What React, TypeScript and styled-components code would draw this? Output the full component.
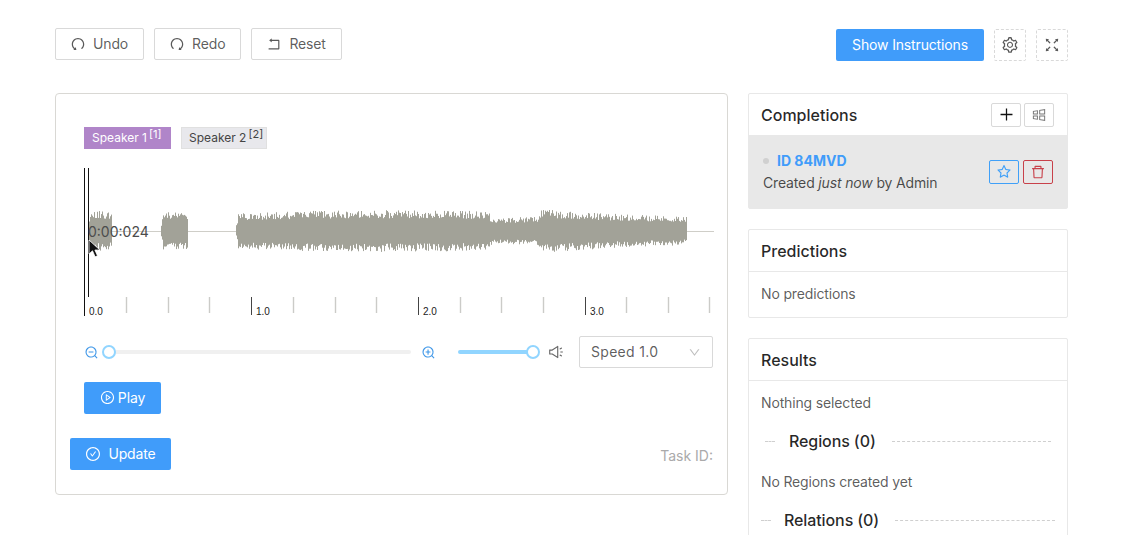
import styled, { createGlobalStyle } from "styled-components";
import {
  AiOutlineUndo,
  AiOutlineRedo,
  AiOutlineRollback,
  AiOutlineSetting,
  AiOutlineFullscreen,
  AiOutlinePlayCircle,
  AiOutlineCheckCircle,
  AiOutlineZoomIn,
  AiOutlineZoomOut,
  AiOutlineSound,
  AiOutlineDown,
  AiOutlineStar,
  AiOutlineDelete,
  AiOutlinePlus,
  AiOutlineWindows,
} from "react-icons/ai";

const GlobalStyle = createGlobalStyle`
  html, body {
    margin: 0;
    height: 535px;
    overflow: hidden;
    background: #fff;
    font-family: Inter, "Liberation Sans", sans-serif;
    font-size: 14px;
    letter-spacing: -0.15px;
    color: rgba(0, 0, 0, 0.65);
  }
  *, *::before, *::after { box-sizing: border-box; }
`;

// fake audio envelope: x position and amplitude, three bursts of sound
const BURSTS = [
  [[88, 21], [112, 19]],
  [[161, 19], [188, 18]],
  [[236, 18], [300, 20], [380, 21], [488, 20], [492, 12], [537, 15], [541, 22], [600, 18], [687, 14]],
];

function rand(i: number) {
  const v = Math.sin(i * 12.9898) * 43758.5453;
  return v - Math.floor(v);
}

function envelope(points: number[][], x: number) {
  for (let i = 1; i < points.length; i++) {
    const [x0, a0] = points[i - 1];
    const [x1, a1] = points[i];
    if (x <= x1) return a0 + ((a1 - a0) * (x - x0)) / (x1 - x0);
  }
  return 0;
}

function buildWave() {
  let d = "";
  BURSTS.forEach((points) => {
    const from = points[0][0];
    const to = points[points.length - 1][0];
    for (let x = from; x < to; x += 1) {
      const amp = envelope(points, x);
      const edge = Math.min(1, (x - from + 1) / 3, (to - x + 1) / 2);
      const up = amp * edge * (0.6 + 0.4 * rand(x + 0.37));
      const down = amp * edge * (0.6 + 0.4 * rand(x + 500.37));
      d += `M${x + 0.5} ${(63 - up).toFixed(1)}V${(63 + down).toFixed(1)}`;
    }
  });
  return d;
}

const WAVE = buildWave();
const MAJOR = [
  { x: 84, label: "0.0" },
  { x: 251, label: "1.0" },
  { x: 418, label: "2.0" },
  { x: 585, label: "3.0" },
];
const MINOR = [126, 168, 209, 293, 335, 376, 460, 501, 543, 626, 668, 709];

function Waveform() {
  return (
    <WaveBox>
      <svg width="630" height="148" viewBox="84 0 630 148">
        <line x1="88" x2="714" y1="63.5" y2="63.5" stroke="#cfcec8" />
        <path d={WAVE} stroke="#a2a298" strokeWidth="1" fill="none" />
        <line x1="84.5" x2="84.5" y1="0" y2="148" stroke="#111" />
        <line x1="88.5" x2="88.5" y1="0" y2="129" stroke="#111" />
        {MAJOR.map((t) => (
          <g key={t.label}>
            {t.x !== 84 && <line x1={t.x + 0.5} x2={t.x + 0.5} y1="129" y2="147" stroke="#444" />}
            <text x={t.x + 5} y="147" fontSize="10" fontFamily="Liberation Sans" letterSpacing="0" fill="#222">
              {t.label}
            </text>
          </g>
        ))}
        {MINOR.map((x) => (
          <line key={x} x1={x + 0.5} x2={x + 0.5} y1="129" y2="145" stroke="#cbcbc8" strokeWidth="1.4" />
        ))}
      </svg>
      <TimeLabel>0:00:024</TimeLabel>
      <Cursor width="14" height="20" viewBox="0 0 14 20">
        <path d="M1 1v14l3.5-3.2 2.6 6 2.4-1-2.6-5.8h5z" fill="#111" stroke="#fff" strokeWidth="0.8" />
      </Cursor>
    </WaveBox>
  );
}

export default function App() {
  return (
    <Page>
      <GlobalStyle />
      <Toolbar>
        <Group $align="flex-start">
          <Button><AiOutlineUndo size={16} /> Undo</Button>
          <Button><AiOutlineRedo size={16} /> Redo</Button>
          <Button><AiOutlineRollback size={16} /> Reset</Button>
        </Group>
        <Group $align="flex-end">
          <PrimaryButton $width={148}>Show Instructions</PrimaryButton>
          <DashedButton><AiOutlineSetting size={18} /></DashedButton>
          <DashedButton><AiOutlineFullscreen size={18} /></DashedButton>
        </Group>
      </Toolbar>

      <Columns>
        <MainPanel>
          <Inner>
            <Tags>
              <Tag $active>Speaker 1<sup>[1]</sup></Tag>
              <Tag>Speaker 2<sup>[2]</sup></Tag>
            </Tags>
            <Waveform />
            <Controls>
              <ControlGroup $gap={10}>
                <BlueIcon><AiOutlineZoomOut size={15} /></BlueIcon>
                <Slider $width={302} $value={0} />
                <BlueIcon><AiOutlineZoomIn size={15} /></BlueIcon>
              </ControlGroup>
              <ControlGroup $gap={15}>
                <Slider $width={75} $value={100} />
                <SoundIcon size={16} />
                <Select>
                  Speed 1.0
                  <AiOutlineDown size={13} color="#bfbfbf" />
                </Select>
              </ControlGroup>
            </Controls>
            <PlayButton><AiOutlinePlayCircle size={15} /> Play</PlayButton>
          </Inner>
          <Footer>
            <PrimaryButton $width={101}><AiOutlineCheckCircle size={16} /> Update</PrimaryButton>
            <TaskId>Task ID:</TaskId>
          </Footer>
        </MainPanel>

        <Sidebar>
          <Card>
            <CompletionsHeader>
              <CardTitle>Completions</CardTitle>
              <HeaderActions>
                <SmallButton $dark><AiOutlinePlus size={17} /></SmallButton>
                <SmallButton><AiOutlineWindows size={16} /></SmallButton>
              </HeaderActions>
            </CompletionsHeader>
            <Completion>
              <div>
                <CompletionId><Dot />ID 84MVD</CompletionId>
                <Created>Created <em>just now</em> by Admin</Created>
              </div>
              <RowActions>
                <OutlineButton $color="#40a0f8"><AiOutlineStar size={16} color="#40a0f8" /></OutlineButton>
                <OutlineButton $color="#c8414a"><AiOutlineDelete size={16} color="#c8414a" /></OutlineButton>
              </RowActions>
            </Completion>
          </Card>

          <Card>
            <CardHeader><CardTitle>Predictions</CardTitle></CardHeader>
            <CardBody>No predictions</CardBody>
          </Card>

          <Card>
            <CardHeader><CardTitle>Results</CardTitle></CardHeader>
            <ResultsBody>
              <div>Nothing selected</div>
              <Divider $inset={4} $gap={14}>Regions (0)</Divider>
              <div>No Regions created yet</div>
              <Divider $inset={0} $gap={13}>Relations (0)</Divider>
            </ResultsBody>
          </Card>
        </Sidebar>
      </Columns>
    </Page>
  );
}

const Page = styled.div`
  padding: 28px 56px 0 55px;
  height: 535px;
  overflow: hidden;
`;

const Toolbar = styled.div`
  display: flex;
  justify-content: space-between;
  height: 33px;
`;

const Group = styled.div<{ $align: string }>`
  display: flex;
  align-items: center;
  align-self: ${({ $align }) => $align};
  gap: 10px;
`;

const Button = styled.button`
  height: 32px;
  padding: 0 15px 2px 14px;
  display: inline-flex;
  align-items: center;
  gap: 7px;
  background: #fff;
  border: 1px solid #d9d9d9;
  border-radius: 2px;
  font: inherit;
  letter-spacing: inherit;
  color: rgba(0, 0, 0, 0.65);

  svg {
    position: relative;
    top: 1px;
  }
`;

const PrimaryButton = styled.button<{ $width: number }>`
  width: ${({ $width }) => $width}px;
  height: 32px;
  padding: 0 0 1px;
  display: inline-flex;
  align-items: center;
  justify-content: center;
  gap: 7px;
  background: #409cfa;
  border: 0;
  border-radius: 2px;
  font: inherit;
  letter-spacing: inherit;
  color: #fff;
`;

const DashedButton = styled.button`
  width: 32px;
  height: 32px;
  display: inline-flex;
  align-items: center;
  justify-content: center;
  padding: 0;
  background: #fff;
  border: 1px dashed #d9d9d9;
  border-radius: 2px;
  color: rgba(0, 0, 0, 0.65);
`;

const Columns = styled.div`
  display: flex;
  gap: 20px;
  margin-top: 32px;
  align-items: flex-start;
`;

const MainPanel = styled.div`
  width: 673px;
  height: 402px;
  padding: 33px 14px 0;
  border: 1px solid #d9d8d4;
  border-radius: 4px;
`;

const Inner = styled.div`
  padding-left: 14px;
`;

const Tags = styled.div`
  display: flex;
  gap: 10px;
`;

const Tag = styled.span<{ $active?: boolean }>`
  width: ${({ $active }) => ($active ? 87 : 86)}px;
  height: 22px;
  padding: 0 0 2px 7px;
  display: inline-flex;
  align-items: center;
  font-size: 12px;
  letter-spacing: 0;
  background: ${({ $active }) => ($active ? "#b085c9" : "#e8e8ec")};
  color: ${({ $active }) => ($active ? "#fff" : "#444")};
  border: 1px solid ${({ $active }) => ($active ? "#b085c9" : "#e0e0e0")};

  sup {
    font-size: 11px;
    line-height: 1;
    margin-left: 2px;
    position: relative;
    top: -3px;
    vertical-align: baseline;
  }
`;

const WaveBox = styled.div`
  position: relative;
  height: 148px;
  margin-top: 19px;

  svg {
    display: block;
  }
`;

const TimeLabel = styled.span`
  position: absolute;
  left: 4px;
  top: 55px;
  font-size: 14px;
  letter-spacing: 0;
  color: #4c4c4c;
`;

const Cursor = styled.svg`
  position: absolute;
  left: 4px;
  top: 71px;
`;

const Controls = styled.div`
  display: flex;
  align-items: center;
  justify-content: space-between;
  height: 32px;
  margin-top: 20px;
`;

const ControlGroup = styled.div<{ $gap: number }>`
  display: flex;
  align-items: center;
  gap: ${({ $gap }) => $gap}px;
`;

const BlueIcon = styled.span`
  display: inline-flex;
  color: #3f97e8;
`;

const Slider = styled.div<{ $width: number; $value: number }>`
  position: relative;
  width: ${({ $width }) => $width}px;
  height: 4px;
  border-radius: 2px;
  background: ${({ $value }) => ($value ? "#91d5ff" : "#f0f0f0")};

  &::after {
    content: "";
    position: absolute;
    top: -5px;
    left: ${({ $value }) => $value}%;
    width: 14px;
    height: 14px;
    margin-left: -7px;
    border-radius: 50%;
    background: #fff;
    border: 2px solid #91d5ff;
  }
`;

const SoundIcon = styled(AiOutlineSound)`
  color: #666;
`;

const Select = styled.div`
  width: 134px;
  height: 32px;
  padding: 0 11px;
  display: flex;
  align-items: center;
  justify-content: space-between;
  border: 1px solid #d9d9d9;
  border-radius: 2px;
  letter-spacing: 0.3px;
  line-height: 28px;
`;

const PlayButton = styled.button`
  width: 77px;
  height: 32px;
  margin-top: 14px;
  padding: 0 0 1px;
  display: flex;
  align-items: center;
  justify-content: center;
  gap: 3px;
  background: #409cfa;
  border: 0;
  border-radius: 2px;
  font: inherit;
  letter-spacing: inherit;
  color: #fff;
`;

const Footer = styled.div`
  display: flex;
  justify-content: space-between;
  align-items: flex-end;
  margin-top: 24px;
`;

const TaskId = styled.span`
  color: #aaa;
  line-height: 28px;
  letter-spacing: 0;
`;

const Sidebar = styled.div`
  width: 320px;
  display: flex;
  flex-direction: column;
  gap: 20px;
`;

const Card = styled.div`
  border: 1px solid #e8e8e8;
  border-radius: 2px;
  background: #fff;
`;

const CardHeader = styled.div`
  height: 42px;
  padding: 0 13px 0 12px;
  display: flex;
  align-items: center;
  justify-content: space-between;
  border-bottom: 1px solid #e8e8e8;
`;

const CompletionsHeader = styled(CardHeader)`
  height: 41px;
  border-bottom: 0;
`;

const CardTitle = styled.span`
  font-size: 16px;
  font-weight: 500;
  letter-spacing: 0;
  color: rgba(0, 0, 0, 0.85);
`;

const HeaderActions = styled.div`
  display: flex;
  gap: 3px;
`;

const RowActions = styled.div`
  display: flex;
  gap: 4px;
`;

const SmallButton = styled.button<{ $dark?: boolean }>`
  width: 30px;
  height: 24px;
  padding: 0;
  display: inline-flex;
  align-items: center;
  justify-content: center;
  background: #fff;
  border: 1px solid #d9d9d9;
  border-radius: 2px;
  color: ${({ $dark }) => ($dark ? "#111" : "#777")};
`;

const OutlineButton = styled.button<{ $color: string }>`
  width: 30px;
  height: 24px;
  padding: 0;
  display: inline-flex;
  align-items: center;
  justify-content: center;
  background: transparent;
  border: 1px solid ${({ $color }) => $color};
  border-radius: 2px;
`;

const Completion = styled.div`
  height: 73px;
  padding: 0 14px;
  display: flex;
  justify-content: space-between;
  align-items: center;
  background: #e8e8e8;
`;

const CompletionId = styled.div`
  display: flex;
  align-items: center;
  color: #409cfa;
  font-weight: 700;
  letter-spacing: 0;
  margin-bottom: 5px;
`;

const Dot = styled.span`
  width: 6px;
  height: 6px;
  margin-right: 8px;
  border-radius: 50%;
  background: #d0d0d0;
`;

const Created = styled.div`
  color: rgba(0, 0, 0, 0.7);
`;

const CardBody = styled.div`
  height: 45px;
  padding: 0 12px 2px;
  display: flex;
  align-items: center;
`;

const ResultsBody = styled.div`
  padding: 13px 12px 0;
`;

const Divider = styled.div<{ $inset: number; $gap: number }>`
  display: flex;
  align-items: center;
  height: 24px;
  margin: 18px 0 20px;
  padding: 0 ${({ $inset }) => $inset}px;
  font-size: 16px;
  font-weight: 500;
  letter-spacing: -0.1px;
  color: rgba(0, 0, 0, 0.85);

  &::before {
    content: "";
    width: 10px;
    margin-right: ${({ $gap }) => $gap}px;
    border-top: 1px dashed #cfcfcf;
  }

  &::after {
    content: "";
    flex: 1;
    margin-left: 16px;
    border-top: 1px dashed #cfcfcf;
  }
`;
